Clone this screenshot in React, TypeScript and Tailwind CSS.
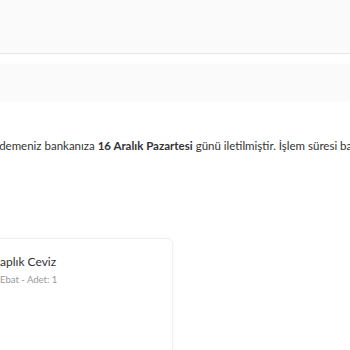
export default function App() {
  return (
    <div
      className="h-[350px] w-[350px] overflow-hidden bg-white text-[#333]"
      style={{ fontFamily: 'Lato, "Open Sans", sans-serif' }}
    >
      <div className="h-[54px] border-b border-[#e6e6e6] bg-[#fafafa]" />
      <div className="mt-[10px] h-[37px] bg-[#fafafa] shadow-[0_0_6px_#fafafa]" />

      <p className="mt-[36px] -ml-[10px] whitespace-nowrap text-[11.5px] leading-[18px] text-[#333]">
        Ödemeniz bankanıza <b className="font-bold">16 Aralık Pazartesi</b> günü iletilmiştir. İşlem süresi bankanıza göre değişiklik gösterebilir.
      </p>

      <div className="mt-[83px] -ml-[40px] h-[130px] w-[213px] rounded-md border border-[#f0f0f0] bg-white shadow-[0_0_4px_rgba(0,0,0,0.03)]">
        <div className="pl-[39px] pt-[14px]">
          <div className="whitespace-nowrap text-[12px] leading-[18px] text-[#333]">aplık Ceviz</div>
          <div className="mt-[2px] whitespace-nowrap text-[9.5px] leading-[14px] text-[#999]">
            Ebat - Adet: 1
          </div>
        </div>
      </div>
    </div>
  );
}
